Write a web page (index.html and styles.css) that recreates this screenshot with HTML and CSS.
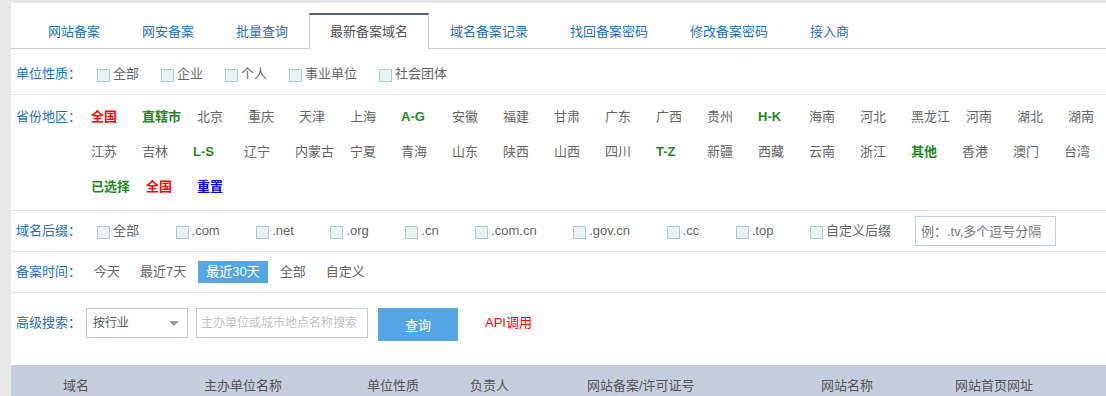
FILE: index.html
```html
<!DOCTYPE html>
<html lang="zh-CN">
<head>
<meta charset="utf-8">
<title>最新备案域名</title>
<link rel="stylesheet" href="styles.css">
</head>
<body>
<div class="panel">
  <ul class="tabs">
    <li class="tab">网站备案</li>
    <li class="tab">网安备案</li>
    <li class="tab">批量查询</li>
    <li class="tab active">最新备案域名</li>
    <li class="tab">域名备案记录</li>
    <li class="tab">找回备案密码</li>
    <li class="tab">修改备案密码</li>
    <li class="tab">接入商</li>
  </ul>

  <div class="row row-type">
    <span class="label">单位性质<span class="colon">：</span></span>
    <div class="opts type-opts">
      <span class="chk"><span class="box"></span>全部</span>
      <span class="chk"><span class="box"></span>企业</span>
      <span class="chk"><span class="box"></span>个人</span>
      <span class="chk"><span class="box"></span>事业单位</span>
      <span class="chk"><span class="box"></span>社会团体</span>
    </div>
  </div>

  <div class="row row-region">
    <span class="label">省份地区<span class="colon">：</span></span>
    <div class="region-wrap">
      <div class="regions">
        <span class="rg red">全国</span>
        <span class="rg green">直辖市</span>
        <span class="rg">北京</span>
        <span class="rg">重庆</span>
        <span class="rg">天津</span>
        <span class="rg">上海</span>
        <span class="rg green">A-G</span>
        <span class="rg">安徽</span>
        <span class="rg">福建</span>
        <span class="rg">甘肃</span>
        <span class="rg">广东</span>
        <span class="rg">广西</span>
        <span class="rg">贵州</span>
        <span class="rg green">H-K</span>
        <span class="rg">海南</span>
        <span class="rg">河北</span>
        <span class="rg">黑龙江</span>
        <span class="rg">河南</span>
        <span class="rg">湖北</span>
        <span class="rg">湖南</span>
        <span class="rg">江苏</span>
        <span class="rg">吉林</span>
        <span class="rg green">L-S</span>
        <span class="rg">辽宁</span>
        <span class="rg">内蒙古</span>
        <span class="rg">宁夏</span>
        <span class="rg">青海</span>
        <span class="rg">山东</span>
        <span class="rg">陕西</span>
        <span class="rg">山西</span>
        <span class="rg">四川</span>
        <span class="rg green">T-Z</span>
        <span class="rg">新疆</span>
        <span class="rg">西藏</span>
        <span class="rg">云南</span>
        <span class="rg">浙江</span>
        <span class="rg green">其他</span>
        <span class="rg">香港</span>
        <span class="rg">澳门</span>
        <span class="rg">台湾</span>
      </div>
      <div class="regions">
        <span class="rg green">已选择</span>
        <span class="rg red">全国</span>
        <span class="rg blue">重置</span>
      </div>
    </div>
  </div>

  <div class="row row-suffix">
    <span class="label">域名后缀<span class="colon">：</span></span>
    <div class="opts sfx-opts">
      <span class="chk"><span class="box"></span>全部</span>
      <span class="chk"><span class="box"></span>.com</span>
      <span class="chk"><span class="box"></span>.net</span>
      <span class="chk"><span class="box"></span>.org</span>
      <span class="chk"><span class="box"></span>.cn</span>
      <span class="chk"><span class="box"></span>.com.cn</span>
      <span class="chk"><span class="box"></span>.gov.cn</span>
      <span class="chk"><span class="box"></span>.cc</span>
      <span class="chk"><span class="box"></span>.top</span>
      <span class="chk custom"><span class="box"></span>自定义后缀</span>
      <input class="txt sfx-input" type="text" placeholder="例：.tv,多个逗号分隔">
    </div>
  </div>

  <div class="row row-time">
    <span class="label">备案时间<span class="colon">：</span></span>
    <div class="opts time-opts">
      <span class="tm">今天</span>
      <span class="tm">最近7天</span>
      <span class="tm on">最近30天</span>
      <span class="tm">全部</span>
      <span class="tm">自定义</span>
    </div>
  </div>

  <div class="row row-search">
    <span class="label">高级搜索<span class="colon">：</span></span>
    <div class="opts search-opts">
      <div class="select"><span>按行业</span><span class="caret"></span></div>
      <input class="txt key-input" type="text" placeholder="主办单位或城市地点名称搜索">
      <button class="btn" type="button">查询</button>
      <span class="api">API调用</span>
    </div>
  </div>

  <div class="thead">
    <span>域名</span>
    <span>主办单位名称</span>
    <span>单位性质</span>
    <span>负责人</span>
    <span>网站备案/许可证号</span>
    <span>网站名称</span>
    <span>网站首页网址</span>
  </div>
</div>
</body>
</html>
```

FILE: styles.css
```css
html, body {
  margin: 0;
  padding: 0;
  overflow: hidden;
  background: #e8e8e8;
}

body {
  font-family: "Liberation Sans", "Noto Sans CJK SC", sans-serif;
  font-size: 13px;
  color: #666;
}

.panel {
  margin: 3px 0 0 11px;
  background: #fff;
  min-height: 393px;
}

/* tabs */
.tabs {
  display: flex;
  align-items: flex-start;
  list-style: none;
  margin: 0;
  padding: 10px 0 0 16px;
  height: 35px;
  border-bottom: 1px solid #c5cde0;
}

.tab {
  height: 34px;
  line-height: 34px;
  padding: 0 20px;
  border: 1px solid transparent;
  border-top: 2px solid transparent;
  border-bottom: 0;
  margin-bottom: -1px;
  color: #1f70c2;
  white-space: nowrap;
}

.tab.active {
  border-color: #c5cde0;
  border-top-color: #56617c;
  background: #fff;
  color: #555;
}

/* rows */
.row {
  display: flex;
  align-items: flex-start;
  padding-left: 5px;
  border-bottom: 1px solid #e6e6e6;
}

.label {
  flex: none;
  width: 70px;
  color: #1f70c2;
  white-space: nowrap;
}

.colon {
  font-family: "Noto Sans CJK TC", "Noto Sans CJK SC", sans-serif;
  line-height: 1;
}

.opts {
  display: flex;
  align-items: center;
  white-space: nowrap;
}

.row-type {
  padding-top: 10px;
  padding-bottom: 5px;
  line-height: 30px;
}

.row-type .opts,
.row-suffix .opts,
.row-time .opts {
  height: 30px;
}

.chk {
  display: flex;
  align-items: center;
}

.box {
  display: inline-block;
  width: 11px;
  height: 11px;
  border: 1px solid #a9cfd5;
  background: #e9f3f3;
  margin-right: 3px;
  position: relative;
  top: 1px;
}

.type-opts {
  padding-left: 11px;
}

.type-opts .chk {
  margin-right: 22px;
}

/* region */
.row-region {
  padding-top: 4px;
  padding-bottom: 6px;
  line-height: 35px;
}

.region-wrap {
  flex: none;
  width: 1040px;
  padding-left: 5px;
}

.regions {
  display: flex;
  flex-wrap: wrap;
}

.rg {
  min-width: 35px;
  margin-right: 16px;
  white-space: nowrap;
}

.rg.red {
  color: #f00;
  font-weight: bold;
}

.rg.green {
  color: #1f8a1f;
  font-weight: bold;
}

.rg.blue {
  color: #00f;
  font-weight: bold;
}

/* suffix */
.row-suffix {
  padding-top: 5px;
  padding-bottom: 5px;
  line-height: 30px;
}

.sfx-opts {
  padding-left: 11px;
}

.sfx-opts .chk {
  margin-right: 36.5px;
}

.sfx-opts .chk.custom {
  margin-right: 24px;
}

.txt {
  box-sizing: border-box;
  height: 30px;
  border: 1px solid #c5cde0;
  padding: 0 4px;
  font-family: "Liberation Sans", "Noto Sans CJK SC", sans-serif;
  font-size: 13px;
  color: #555;
  outline: none;
  margin: 0;
}

.sfx-input {
  width: 141px;
  padding-left: 5px;
  font-family: "Liberation Sans", "Noto Sans CJK TC", "Noto Sans CJK SC", sans-serif;
}

.sfx-input::placeholder {
  color: #777;
}

/* time */
.row-time {
  padding-top: 5px;
  padding-bottom: 5px;
  line-height: 30px;
}

.tm {
  padding: 0 8px;
  margin-right: 4px;
  line-height: 22px;
}

.tm.on {
  background: #55a6e2;
  color: #fff;
}

/* search */
.row-search {
  padding-top: 15px;
  padding-bottom: 24px;
  line-height: 30px;
  border-bottom: 0;
}

.search-opts {
  align-items: flex-start;
}

.select {
  box-sizing: border-box;
  width: 102px;
  height: 30px;
  border: 1px solid #c5cde0;
  padding: 0 8px 0 6px;
  display: flex;
  align-items: center;
  justify-content: space-between;
  color: #555;
  font-size: 12px;
  line-height: 28px;
}

.caret {
  width: 0;
  height: 0;
  border-left: 5px solid transparent;
  border-right: 5px solid transparent;
  border-top: 5px solid #999;
}

.key-input {
  width: 172px;
  margin-left: 8px;
  font-size: 12px;
}

.key-input::placeholder {
  color: #c4c4c4;
}

.btn {
  margin-left: 10px;
  width: 80px;
  height: 33px;
  border: 0;
  padding: 0;
  background: #55a6e2;
  color: #fff;
  font-family: "Liberation Sans", "Noto Sans CJK SC", sans-serif;
  font-size: 13px;
}

.api {
  margin-left: 27px;
  color: #f00;
}

/* table header */
.thead {
  display: grid;
  grid-template-columns: 141px 163px 103px 117px 234px 134px 1fr;
  padding-left: 52px;
  height: 42px;
  line-height: 42px;
  background: #c6cedd;
  color: #555;
  white-space: nowrap;
}
```
